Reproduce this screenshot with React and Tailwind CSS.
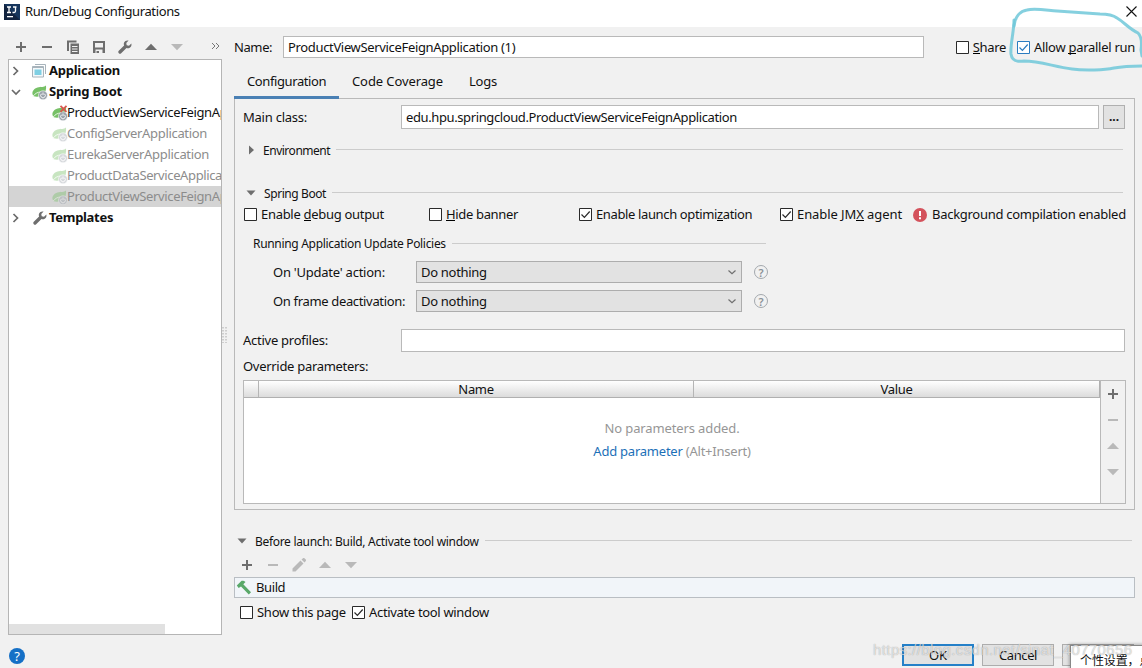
const GRAY = "#6e6e6e";
const LIGHT = "#b9b9b9";

function Plus({ color = GRAY }) {
  return (
    <svg className="size-4 shrink-0" viewBox="0 0 16 16">
      <path d="M7 3h2v4h4v2H9v4H7V9H3V7h4z" fill={color} />
    </svg>
  );
}

function Minus({ color = GRAY }) {
  return (
    <svg className="size-4 shrink-0" viewBox="0 0 16 16">
      <path d="M3 7h10v2H3z" fill={color} />
    </svg>
  );
}

function Up({ color = GRAY }) {
  return (
    <svg className="size-4 shrink-0" viewBox="0 0 16 16">
      <path d="M2 11 8 4.800l6 6.200z" fill={color} />
    </svg>
  );
}

function Down({ color = GRAY }) {
  return (
    <svg className="size-4 shrink-0" viewBox="0 0 16 16">
      <path d="M2 5h12L8 11.200z" fill={color} />
    </svg>
  );
}

function Copy() {
  return (
    <svg className="size-4 shrink-0" viewBox="0 0 16 16" fill="none" stroke={GRAY}>
      <path d="M3 12V2.500h8.500" strokeWidth="2" />
      <path d="M5.500 4.500H14V15H5.500z" fill={GRAY} stroke="none" />
      <path d="M7 7.500h5.500M7 10h5.500M7 12.500h5.500" stroke="#f1f1f1" strokeWidth="1" />
    </svg>
  );
}

function Save() {
  return (
    <svg className="size-4 shrink-0" viewBox="0 0 16 16">
      <path
        fillRule="evenodd"
        d="M2 2h12v12h-2.500v-3.500h-7V14H2zM4 4v4.500h8V4zM5.500 12H8v2H5.500z"
        fill={GRAY}
      />
    </svg>
  );
}

function Wrench() {
  return (
    <svg className="size-4 shrink-0" viewBox="0 0 16 16">
      <path
        d="M14.300 4.400 12 6.700 9.700 6.200 9.300 4 11.600 1.600C9.800 1 7.900 1.700 7.100 3.400c-.5 1.100-.5 2.100 0 3.100L1.800 11.800c-.7.700-.7 1.700 0 2.400s1.700.7 2.400 0L9.500 8.900c1 .5 2.200.4 3.200-.2 1.500-.9 2.200-2.700 1.600-4.300z"
        fill={GRAY}
      />
    </svg>
  );
}

function Pencil() {
  return (
    <svg className="size-4 shrink-0" viewBox="0 0 16 16">
      <path d="M1.500 14.500V11.500L9.500 3.500l3 3-8 8zM10.500 2.500 12 1.200c.5-.4 1-.4 1.400 0l1.400 1.400c.4.4.4 1 0 1.400L13.500 5.500z" fill={LIGHT} />
    </svg>
  );
}

function Hammer() {
  return (
    <svg className="size-4 shrink-0" viewBox="0 0 16 16">
      <path d="M.8 5.600 5.600.8C7 .6 8.500 1 9.500 2L7.300 4.200 15 12.200 12.800 14.400 5 6.500 2.700 8z" fill="#59a869" />
    </svg>
  );
}

function SpringIcon({ error }) {
  return (
    <svg className="size-4 shrink-0" viewBox="0 0 16 16">
      <path
        d="M14 1.500C12 3.500 9 2.500 5.500 3.500 2 4.500 0 7.500.5 10c.2 1 .6 1.800 1.200 2.200C4 13 8 13 11 11c2.500-2.500 3.500-5.500 3-9.500z"
        fill="#77c067"
      />
      <path d="M1 12.200C3.500 9 6 8.300 8 8" stroke="#e6f4e2" strokeWidth="1" fill="none" />
      <circle cx="11" cy="11.300" r="4.500" fill="#9aa2aa" stroke="#fff" strokeWidth=".6" />
      <path d="M9.500 9.800a2.300 2.300 0 1 0 3 0M11 8.500v2.600" stroke="#fff" strokeWidth=".9" fill="none" />
      {error && <path d="m8.500.8 6 6M14.500.8l-6 6" stroke="#d9584f" strokeWidth="1.800" />}
    </svg>
  );
}

function AppIcon() {
  return (
    <svg className="size-4 shrink-0" viewBox="0 0 16 16">
      <path d="M3 1.500h10.500V11" fill="none" stroke="#a8b4bc" />
      <path d="M.5 3.500h11v10.500H.5z" fill="#f4f8fa" stroke="#a8b4bc" />
      <path d="M.5 3.500h11v1.500H.5z" fill="#a8b4bc" />
      <path d="M2.500 6.500h7v5.500h-7z" fill="#7fcfe3" />
    </svg>
  );
}

function Chevron({ open }) {
  return (
    <svg className="mr-[9px] h-4 w-[14px] shrink-0" viewBox="0 0 14 16" fill="none" stroke="#6a6a6a" strokeWidth="1.700">
      {open ? <path d="m3 6 4 4 4-4" /> : <path d="m4.500 4 4 4-4 4" />}
    </svg>
  );
}

function Check({ on, blue, children, className }) {
  const c = blue ? "#2b7cc0" : "#2a2a2a";
  return (
    <label className={"flex items-center gap-1 whitespace-nowrap " + className}>
      <svg className="size-[13px] shrink-0" viewBox="0 0 13 13">
        <path d="M.5.5h12v12H.5z" fill="#fff" stroke={c} />
        {on && <path d="m2.500 6.500 2.900 2.900 5.300-5.900" fill="none" stroke={c} strokeWidth="1.200" />}
      </svg>
      <span>{children}</span>
    </label>
  );
}

function Key({ children }) {
  return <span className="inline-block h-[13px] border-b border-black leading-none">{children}</span>;
}

function Section({ open, title, className, titleClass }) {
  return (
    <div className={"flex items-center whitespace-nowrap text-[12px] " + className}>
      <svg className="size-4 shrink-0" viewBox="0 0 16 16">
        {open ? <path d="M3.500 5.500h9L8 10.500z" fill={GRAY} /> : <path d="M6 3.500v9L11 8z" fill={GRAY} />}
      </svg>
      <span className={titleClass}>{title}</span>
      <div className="-mt-px h-px grow bg-[#cccccc]" />
    </div>
  );
}

function Select({ label, labelClass, className }) {
  return (
    <div className={"flex h-[22px] items-center pl-[30px] " + className}>
      <div className={"w-[143px] whitespace-nowrap " + labelClass}>{label}</div>
      <div className="flex h-[22px] w-[326px] items-center justify-between border border-[#adadad] bg-[#e2e2e2] pr-1 pl-1 tracking-[-0.3px]">
        Do nothing
        <svg className="h-3 w-[10px]" viewBox="0 0 10 12">
          <path d="m1.500 4.500 3.500 3.300 3.500-3.300" fill="none" stroke="#707070" strokeWidth="1.200" />
        </svg>
      </div>
      <div className="ml-3 flex size-[14px] items-center justify-center rounded-full border border-[#a3a8ad] text-[11px] leading-none font-semibold text-[#8a9096]">
        ?
      </div>
    </div>
  );
}

function Child({ error, dim, selected, className, children }) {
  return (
    <div className={"flex h-[21px] items-center pl-[43px] whitespace-nowrap " + (selected ? "bg-[#d4d4d4] " : "") + (dim ? "text-[#8c8c8c]" : "")}>
      <div className={dim ? "opacity-40" : ""}>
        <SpringIcon error={error} />
      </div>
      <span className={"-ml-px " + className}>{children}</span>
    </div>
  );
}

export default function App() {
  return (
    <div className="relative flex h-[668px] w-[1142px] flex-col overflow-hidden bg-[#f1f1f1] font-['Noto_Sans','Noto_Sans_CJK_SC',sans-serif] text-[13px] leading-[17px] text-[#111]">
      <header className="flex h-[27px] shrink-0 items-start justify-between bg-white pt-[3px] pl-1">
        <div className="flex items-center gap-[5px]">
          <svg className="size-4" viewBox="0 0 16 16">
            <path d="M0 0h16v16H0z" fill="#12233f" />
            <path d="M0 0h16v16z" fill="#1b4a7c" opacity=".5" />
            <path d="M3 3h4M5 3v5.500M3 8.500h4M9 3h3.500M11.500 3v4q0 1.500-1.500 1.500H8.500" fill="none" stroke="#fff" strokeWidth="1.300" />
            <path d="M3 12h6v1.300H3z" fill="#fff" />
          </svg>
          <span className="tracking-[-0.38px]">Run/Debug Configurations</span>
        </div>
        <svg className="mt-[3px] mr-[5px] size-[11px]" viewBox="0 0 11 11">
          <path d="m.5.500 10 10M10.500.500l-10 10" stroke="#111" strokeWidth="1.100" />
        </svg>
      </header>

      <div className="flex h-[608px] shrink-0">
        <aside className="ml-2 flex w-[214px] flex-col">
          <div className="flex h-8 shrink-0 items-start gap-[10px] pt-3 pl-[5px]">
            <Plus />
            <Minus />
            <Copy />
            <Save />
            <Wrench />
            <Up />
            <Down color={LIGHT} />
            <svg className="mt-[2px] ml-4 h-[10px] w-[9px] shrink-0" viewBox="0 0 9 10" fill="none" stroke="#777">
              <path d="m1 2 3 3-3 3M5 2l3 3-3 3" />
            </svg>
          </div>
          <div className="flex grow flex-col overflow-hidden border border-[#b5b5b5] bg-white">
            <div className="flex h-[21px] items-center font-bold">
              <Chevron />
              <AppIcon />
              <span className="ml-px tracking-[-0.25px]">Application</span>
            </div>
            <div className="flex h-[21px] items-center font-bold">
              <Chevron open />
              <SpringIcon />
              <span className="ml-px tracking-[-0.24px]">Spring Boot</span>
            </div>
            <Child error className="tracking-[-0.36px]">ProductViewServiceFeignApplication</Child>
            <Child dim className="tracking-[-0.33px]">ConfigServerApplication</Child>
            <Child dim className="tracking-[-0.33px]">EurekaServerApplication</Child>
            <Child dim className="tracking-[-0.38px]">ProductDataServiceApplication</Child>
            <Child dim selected className="tracking-[-0.36px]">ProductViewServiceFeignApplication</Child>
            <div className="flex h-[21px] items-center font-bold">
              <Chevron />
              <Wrench />
              <span className="ml-px tracking-[-0.3px]">Templates</span>
            </div>
            <div className="mt-auto h-[10px] w-[156px] shrink-0 bg-[#e1e1e1]" />
          </div>
        </aside>

        <div className="flex w-3 items-center pt-[7px]">
          <svg className="h-4 w-[5px]" viewBox="0 0 5 16">
            <path d="M1 0v16M4 0v16" stroke="#aaa" strokeDasharray="1.500 1.500" />
          </svg>
        </div>

        <main className="flex w-[901px] flex-col">
          <div className="mt-[9px] flex h-[22px] shrink-0 items-center whitespace-nowrap">
            <span className="w-[49px] tracking-[-0.4px]">Name:</span>
            <div className="flex h-[22px] w-[641px] items-center border border-[#b9b9b9] bg-white pl-1 tracking-[-0.34px]">
              ProductViewServiceFeignApplication (1)
            </div>
            <Check className="ml-8 tracking-[-0.35px]"><Key>S</Key>hare</Check>
            <Check on blue className="ml-[11px] tracking-[-0.28px]">Allow <Key>p</Key>arallel run</Check>
          </div>

          <nav className="relative mt-2 -mb-px flex h-[33px] shrink-0 whitespace-nowrap">
            <div className="w-[105px] border-b-[3px] border-[#4a80b4] pt-[7px] pl-[13px] tracking-[-0.4px]">Configuration</div>
            <div className="w-[117px] pt-[7px] pl-[13px] tracking-[-0.1px]">Code Coverage</div>
            <div className="pt-[7px] pl-[13px] tracking-[-0.2px]">Logs</div>
          </nav>

          <section className="flex h-[412px] shrink-0 flex-col border border-[#b9b9b9] pr-2 pl-2">
            <div className="mt-[6px] flex h-6 shrink-0 items-center">
              <span className="w-[158px] tracking-[-0.24px]">Main class:</span>
              <div className="flex h-6 w-[698px] items-center border border-[#b9b9b9] bg-white pl-1 tracking-[-0.39px]">
                edu.hpu.springcloud.ProductViewServiceFeignApplication
              </div>
              <div className="ml-1 flex h-6 w-[22px] items-center justify-center border border-[#b0b0b0] bg-[#e2e2e2] text-[12px] leading-none font-bold">
                ...
              </div>
            </div>

            <Section title="Environment" className="mt-3 h-[18px] w-[880px] shrink-0" titleClass="ml-1 mr-[6px] tracking-[-0.48px]" />
            <Section open title="Spring Boot" className="mt-[25px] h-[18px] w-[880px] shrink-0" titleClass="ml-[5px] mr-[6px] tracking-[-0.42px]" />

            <div className="mt-1 flex h-[17px] w-[890px] shrink-0 items-center whitespace-nowrap">
              <Check className="ml-px w-[185px] tracking-[-0.3px]">Enable <Key>d</Key>ebug output</Check>
              <Check className="w-[150px] tracking-[-0.34px]"><Key>H</Key>ide banner</Check>
              <Check on className="w-[201px] tracking-[-0.37px]">Enable launch optimi<Key>z</Key>ation</Check>
              <Check on className="w-[133px] tracking-[-0.08px]">Enable JM<Key>X</Key> agent</Check>
              <svg className="size-[14px] shrink-0" viewBox="0 0 14 14">
                <circle cx="7" cy="7" r="7" fill="#d4525c" />
                <path d="M6 3h2v5H6zM6 9.300h2v1.900H6z" fill="#fff" />
              </svg>
              <span className="ml-[5px] tracking-[-0.28px]">Background compilation enabled</span>
            </div>

            <div className="mt-3 ml-[10px] flex h-[17px] w-[513px] shrink-0 items-center whitespace-nowrap text-[12px]">
              <span className="mr-[6px] tracking-[-0.31px]">Running Application Update Policies</span>
              <div className="-mt-px h-px grow bg-[#cccccc]" />
            </div>
            <Select label="On 'Update' action:" labelClass="tracking-[-0.24px]" className="mt-[9px]" />
            <Select label="On frame deactivation:" labelClass="tracking-[-0.34px]" className="mt-[7px]" />

            <div className="mt-[17px] flex h-[23px] shrink-0 items-center">
              <span className="w-[158px] tracking-[-0.26px]">Active profiles:</span>
              <div className="h-[23px] w-[724px] border border-[#b9b9b9] bg-white" />
            </div>
            <div className="mt-[6px] h-[18px] shrink-0 tracking-[-0.3px]">Override parameters:</div>

            <div className="mt-1 flex h-[124px] shrink-0 border border-[#b9b9b9]">
              <div className="flex w-[856px] flex-col bg-white">
                <div className="flex h-[17px] shrink-0 border-r border-b border-[#b0b0b0] bg-linear-to-b from-white to-[#dcdcdc] text-center tracking-[-0.35px]">
                  <div className="w-[15px] border-r border-[#b5b5b5]" />
                  <div className="w-[435px] border-r border-[#b5b5b5] leading-[17px]">Name</div>
                  <div className="grow leading-[17px]">Value</div>
                </div>
                <div className="mt-[22px] text-center tracking-[-0.12px] text-[#969696]">No parameters added.</div>
                <div className="mt-[6px] text-center tracking-[-0.23px] text-[#969696]">
                  <span className="text-[#1c70b8]">Add parameter</span> (Alt+Insert)
                </div>
              </div>
              <div className="flex grow flex-col items-center gap-[10px] border-l border-[#b9b9b9] pt-[5px]">
                <Plus />
                <Minus color={LIGHT} />
                <Up color={LIGHT} />
                <Down color={LIGHT} />
              </div>
            </div>
          </section>

          <Section
            open
            title="Before launch: Build, Activate tool window"
            className="mt-[22px] h-[18px] w-[898px] shrink-0"
            titleClass="ml-[5px] mr-[6px] tracking-[-0.31px]"
          />
          <div className="mt-[7px] flex h-4 shrink-0 gap-[10px] pl-[5px]">
            <Plus />
            <Minus color={LIGHT} />
            <Pencil />
            <Up color={LIGHT} />
            <Down color={LIGHT} />
          </div>
          <div className="mt-1 flex h-[21px] shrink-0 items-center border border-[#b9bec3] bg-[#f1f5f9] pl-px">
            <Hammer />
            <span className="ml-1 tracking-[-0.4px]">Build</span>
          </div>
          <div className="mt-[6px] flex h-[17px] shrink-0 pl-[6px]">
            <Check className="w-[112px] tracking-[-0.27px]">Show this page</Check>
            <Check on className="tracking-[-0.33px]">Activate tool window</Check>
          </div>
        </main>
      </div>

      <footer className="flex h-[33px] shrink-0 items-start pt-[9px] pl-[9px]">
        <div className="mt-[4px] flex size-4 items-center justify-center rounded-full bg-[#1570c6] text-[13px] leading-none text-white">?</div>
        <div className="ml-[877px] flex h-[22px] w-[72px] items-center justify-center border-2 border-[#2580c8] bg-[#e2e2e2]">OK</div>
        <div className="ml-2 flex h-[22px] w-[72px] items-center justify-center border border-[#adadad] bg-[#e2e2e2] tracking-[-0.4px]">Cancel</div>
        <div className="ml-2 h-[22px] w-[72px] border border-[#adadad] bg-[#e2e2e2]" />
      </footer>

      <div className="absolute top-[645px] left-[1070px] h-[30px] w-[90px] overflow-hidden border border-[#888] bg-white pt-[5px] pl-[9px] font-['Noto_Sans_CJK_SC',sans-serif] text-[12px] leading-[18px] tracking-[-0.1px] whitespace-nowrap shadow-[-1px_-1px_3px_#0004]">
        个性设置，点
      </div>
      <div className="absolute top-[641px] left-[873px] font-['Liberation_Sans',sans-serif] text-[15px] leading-[18px] tracking-[0.4px] whitespace-nowrap text-white/65 [text-shadow:0_0_1px_#0006]">
        https://blog.csdn.net/sinat_40770656
      </div>
      <svg className="pointer-events-none absolute top-0 right-0 h-20 w-[142px]" viewBox="1000 0 142 80" fill="none" stroke="#70c8d9" strokeOpacity=".85" strokeWidth="3" strokeLinecap="round">
        <path d="M1014 26C1015 17 1020 11 1027 10 1034 8 1045 10 1057 11L1100 14C1108 14 1113 15 1117 18 1124 22 1128 28 1138 33 1142 37 1142 43 1141 50L1142 56" />
        <path d="M1014 20C1014 32 1010 45 1011 54 1012 61 1017 62 1024 61 1040 61 1055 67 1072 69 1085 71 1105 70 1114 68 1125 66 1133 66 1143 66" />
      </svg>
    </div>
  );
}
